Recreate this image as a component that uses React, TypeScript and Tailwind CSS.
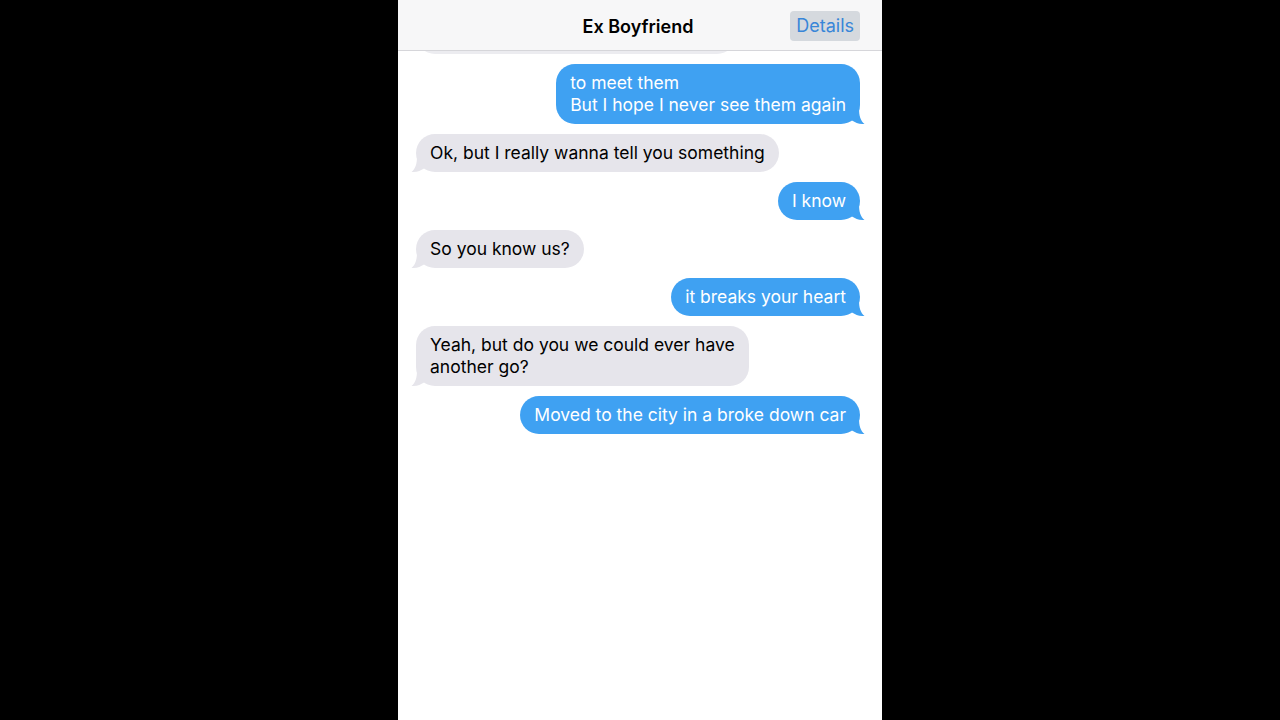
type Msg = { from: "me" | "them"; lines: string[] };

const messages: Msg[] = [
  { from: "me", lines: ["to meet them", "But I hope I never see them again"] },
  { from: "them", lines: ["Ok, but I really wanna tell you something"] },
  { from: "me", lines: ["I know"] },
  { from: "them", lines: ["So you know us?"] },
  { from: "me", lines: ["it breaks your heart"] },
  { from: "them", lines: ["Yeah, but do you we could ever have", "another go?"] },
  { from: "me", lines: ["Moved to the city in a broke down car"] },
];

function Tail({ side, color }: { side: "left" | "right"; color: string }) {
  if (side === "right") {
    return (
      <svg
        className="absolute bottom-0 right-[-5px]"
        width="14"
        height="16"
        viewBox="0 0 14 16"
      >
        <path d="M1 0 L8 0 C8 8 9.5 12.5 13.5 16 C8 16.2 4.5 14.8 1 12.5 Z" fill={color} />
      </svg>
    );
  }
  return (
    <svg
      className="absolute bottom-0 left-[-5px]"
      width="14"
      height="16"
      viewBox="0 0 14 16"
    >
      <path d="M13 0 L6 0 C6 8 4.5 12.5 0.5 16 C6 16.2 9.5 14.8 13 12.5 Z" fill={color} />
    </svg>
  );
}

function Bubble({ msg }: { msg: Msg }) {
  const mine = msg.from === "me";
  return (
    <div className={mine ? "flex justify-end" : "flex justify-start"}>
      <div
        className={
          mine
            ? "relative rounded-[19px] bg-[#3fa1f2] px-[14px] py-[8px] text-white"
            : "relative rounded-[19px] bg-[#e6e5eb] px-[14px] py-[8px] text-black"
        }
      >
        <p className="relative z-10 whitespace-nowrap text-[17.5px] leading-[22px]">
          {msg.lines.map((l, i) => (
            <span key={i} className="block">
              {l}
            </span>
          ))}
        </p>
        <Tail side={mine ? "right" : "left"} color={mine ? "#3fa1f2" : "#e6e5eb"} />
      </div>
    </div>
  );
}

export default function App() {
  return (
    <div
      className="flex h-[720px] w-full justify-center bg-black"
      style={{ fontFamily: 'Inter, "Liberation Sans", Arial, sans-serif' }}
    >
      <div className="flex w-[484px] flex-col bg-white">
        {/* nav bar */}
        <div className="relative z-10 flex h-[51px] shrink-0 items-center justify-center border-b border-[#d6d6da] bg-[#f7f7f8]">
          <h1 className="ml-[-4px] mt-[2px] text-[18px] font-semibold text-black">Ex Boyfriend</h1>
          <button className="absolute right-[22px] top-[11px] h-[30px] rounded-[4px] bg-[#d5d9de] px-[6px] text-[18px] leading-[30px] text-[#3886d8]">
            Details
          </button>
        </div>

        {/* thread */}
        <div className="flex flex-1 flex-col gap-[10px] overflow-hidden pl-[18px] pr-[22px]">
          <div className="-mt-[35px] flex justify-start">
            <div className="h-[38px] w-[320px] rounded-[19px] bg-[#ececf0]" />
          </div>
          {messages.map((m, i) => (
            <Bubble key={i} msg={m} />
          ))}
        </div>
      </div>
    </div>
  );
}
